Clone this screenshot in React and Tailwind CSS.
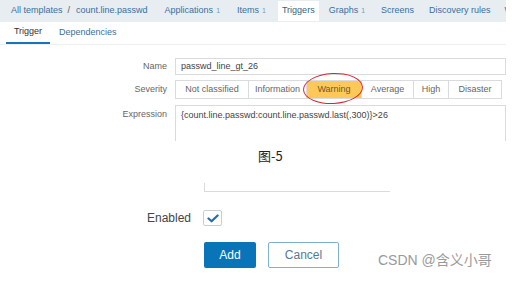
import React from 'react'

const navItems = [
  { label: 'Applications', count: '1', ml: 'ml-[17px]' },
  { label: 'Items', count: '1', ml: 'ml-[17px]' },
]

const severities = [
  { label: 'Not classified', w: 'w-[72px]' },
  { label: 'Information', w: 'w-[58px]' },
  { label: 'Warning', w: 'w-[55px]', active: true },
  { label: 'Average', w: 'w-[52px]' },
  { label: 'High', w: 'w-[35px]' },
  { label: 'Disaster', w: 'w-[53px]' },
]

function App() {
  return (
    <div className="relative w-[528px] h-[281px] bg-white overflow-hidden font-['Liberation_Sans',Arial,sans-serif]">
      {/* screenshot of the trigger form */}
      <div className="w-[506px] h-[141px] overflow-hidden">
        <div className="h-[22px] bg-[#e8edf1] flex items-center text-[9px] text-[#3b6f9c] whitespace-nowrap">
          <span className="ml-[11px]">All templates</span>
          <span className="ml-[5px] text-[#555]">/</span>
          <span className="ml-[6px]">count.line.passwd</span>
          {navItems.map((n) => (
            <span key={n.label} className={n.ml}>
              {n.label}
              <span className="text-[7px] ml-[3px] text-[#7a9cb8]">{n.count}</span>
            </span>
          ))}
          <span className="ml-[12px] bg-white px-[4px] py-[3px] text-[#3a5f80]">Triggers</span>
          <span className="ml-[10px]">
            Graphs<span className="text-[7px] ml-[3px] text-[#7a9cb8]">1</span>
          </span>
          <span className="ml-[16px]">Screens</span>
          <span className="ml-[15px]">Discovery rules</span>
          <span className="ml-[14px]">W</span>
        </div>
        <div className="h-[23px] border-b border-[#eef0f2] flex items-end text-[9px] whitespace-nowrap">
          <div className="ml-[6px] w-[44px] h-full flex flex-col items-center justify-center border-b-2 border-[#1b74b8] text-[#333]">
            Trigger
          </div>
          <div className="ml-[9px] h-full flex items-center text-[#3b6f9c]">Dependencies</div>
        </div>

        <div className="mt-[13px] flex items-center h-[17px] text-[9px]">
          <div className="w-[167px] text-right text-[#666]">Name</div>
          <div className="ml-[8px] flex-1 h-full border border-[#d8dcdf] flex items-center px-[5px] text-[#444]">
            passwd_line_gt_26
          </div>
        </div>

        <div className="mt-[5px] flex items-center h-[19px] text-[9px]">
          <div className="w-[167px] text-right text-[#666]">Severity</div>
          <div className="ml-[8px] flex h-full border border-[#d8dcdf]">
            {severities.map((s, i) => (
              <div
                key={s.label}
                className={`${s.w} flex items-center justify-center ${i > 0 ? 'border-l border-[#d8dcdf]' : ''} ${s.active ? 'bg-[#ffc859] text-[#6a5a2e]' : 'text-[#666]'}`}
              >
                {s.label}
              </div>
            ))}
          </div>
        </div>

        <div className="mt-[6px] flex items-start text-[9px]">
          <div className="w-[167px] text-right text-[#666] pt-[3px]">Expression</div>
          <div className="ml-[8px] flex-1 h-[50px] border border-[#d8dcdf] px-[5px] pt-[3px] text-[#444] whitespace-nowrap">
            {'{count.line.passwd:count.line.passwd.last(,300)}>26'}
          </div>
        </div>
      </div>

      <div className="mt-[6px] pl-[258px] text-[13px] leading-[18px] text-[#222] font-['Noto_Sans_CJK_SC',sans-serif]">
        图-5
      </div>

      {/* second screenshot */}
      <div className="mt-[18px] ml-[204px] w-[186px] h-[9px] border-l border-b border-[#d8dcdf]" />

      <div className="mt-[17px] flex items-center text-[12px] text-[#444]">
        <div className="w-[191px] text-right">Enabled</div>
        <div className="ml-[12px] w-[19px] h-[16px] border border-[#c9ced3] rounded-[2px] flex items-center justify-center">
          <svg width="12" height="9" viewBox="0 0 12 9">
            <path d="M1.5 4.5 L4.6 7.3 L10.6 1.5" fill="none" stroke="#1f6fae" strokeWidth="2.2" strokeLinecap="round" strokeLinejoin="round" />
          </svg>
        </div>
      </div>

      <div className="mt-[15px] ml-[204px] flex gap-[12px] text-[12px]">
        <div className="w-[52px] h-[26px] rounded-[2px] bg-[#0a74b9] text-white flex items-center justify-center">
          Add
        </div>
        <div className="w-[71px] h-[26px] rounded-[2px] border border-[#7fb0d2] text-[#557a96] flex items-center justify-center">
          Cancel
        </div>
      </div>

      {/* red annotation ring */}
      <div className="absolute left-[303px] top-[73px] w-[60px] h-[31px] rounded-[50%] border-[1.5px] border-[#d8262c] -rotate-3" />

      {/* watermark */}
      <div className="absolute left-[378px] top-[251px] text-[14px] leading-[18px] text-[#9a9a9a] font-['Liberation_Sans','Noto_Sans_CJK_SC',sans-serif] whitespace-nowrap">
        CSDN @含义小哥
      </div>
    </div>
  )
}

export default App
